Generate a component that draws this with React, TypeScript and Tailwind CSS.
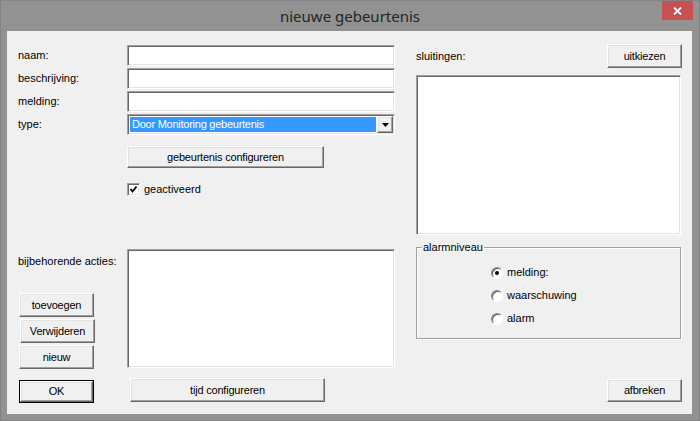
import React from 'react';

const raised =
  'bg-[#f0f0f0] border border-t-white border-l-white border-r-[#696969] border-b-[#696969] shadow-[inset_-1px_-1px_0_#a0a0a0,inset_1px_1px_0_#e3e3e3]';
const sunken =
  'bg-white border border-t-[#a0a0a0] border-l-[#a0a0a0] border-r-white border-b-white shadow-[inset_1px_1px_0_#696969,inset_-1px_-1px_0_#e3e3e3]';

const Btn = ({ label, className = '' }: { label: string; className?: string }) => (
  <div className={`${raised} flex items-center justify-center tracking-[-0.2px] ${className}`}>{label}</div>
);

const Field = ({ label }: { label: string }) => (
  <div className="flex items-center h-[21px]">
    <div className="w-[120px] pl-[11px]">{label}</div>
    <div className={`${sunken} w-[268px] h-[21px]`} />
  </div>
);

const Radio = ({ label, checked = false }: { label: string; checked?: boolean }) => (
  <div className="flex items-center h-[13px] gap-[4px]">
    <div className="w-[12px] h-[12px] rounded-full bg-white border border-t-[#8a8a8a] border-l-[#8a8a8a] border-r-white border-b-white shadow-[inset_1px_1px_0_#5a5a5a] flex items-center justify-center">
      {checked && <div className="w-[4px] h-[4px] rounded-full bg-black" />}
    </div>
    <span>{label}</span>
  </div>
);

const App = () => {
  return (
    <div className="w-[700px] h-[421px] bg-[#929292] border border-[#848484] flex flex-col font-['Liberation_Sans',Arial,sans-serif] text-[11px] leading-[13px] text-black overflow-hidden">
      {/* title bar */}
      <div className="h-[30px] flex items-start shrink-0">
        <div className="w-[37px]" />
        <div className="flex-1 text-center pt-[6px] text-[15px] leading-[18px] text-[#262626] font-['Noto_Sans',sans-serif]">
          nieuwe gebeurtenis
        </div>
        <div className="w-[31px] h-[19px] mr-[6px] bg-[#c75050] flex items-center justify-center">
          <svg width="9" height="8" viewBox="0 0 9 8">
            <path d="M1 0.5 L8 7.5 M8 0.5 L1 7.5" stroke="white" strokeWidth="1.8" />
          </svg>
        </div>
      </div>

      {/* client area */}
      <div className="ml-[6px] mr-[7px] h-[383px] bg-[#f0f0f0] flex shrink-0">
        {/* left column */}
        <div className="w-[388px] flex flex-col pt-[14px]">
          <div className="flex flex-col gap-[2px]">
            <Field label="naam:" />
            <Field label="beschrijving:" />
            <Field label="melding:" />
            <div className="flex items-center h-[21px]">
              <div className="w-[120px] pl-[11px]">type:</div>
              <div className={`${sunken} w-[268px] h-[21px] flex items-center pl-[2px] pr-[1px] gap-[1px]`}>
                <div className="flex-1 h-[15px] bg-[#3399ff] text-white pl-[2px] flex items-center tracking-[-0.25px]">
                  Door Monitoring gebeurtenis
                </div>
                <div className={`${raised} w-[16px] h-[17px] flex items-center justify-center`}>
                  <svg width="7" height="4" viewBox="0 0 7 4">
                    <path d="M0 0 H7 L3.5 4 Z" fill="black" />
                  </svg>
                </div>
              </div>
            </div>
          </div>

          <Btn label="gebeurtenis configureren" className="ml-[120px] mt-[11px] w-[197px] h-[22px]" />

          <div className="ml-[120px] mt-[15px] flex items-center gap-[4px] h-[13px]">
            <div className={`${sunken} w-[13px] h-[13px] flex items-center justify-center`}>
              <svg width="9" height="9" viewBox="0 0 9 9">
                <path d="M1.5 4 L3.5 6.5 L7.5 1.5" stroke="black" strokeWidth="1.8" fill="none" />
              </svg>
            </div>
            <span>geactiveerd</span>
          </div>

          <div className="mt-[53px] flex">
            <div className="w-[120px] flex flex-col">
              <div className="pl-[11px] pt-[6px]">bijbehorende acties:</div>
              <div className="ml-[12px] mt-[25px] flex flex-col gap-[2px]">
                <Btn label="toevoegen" className="w-[75px] h-[24px]" />
                <Btn label="Verwijderen" className="w-[75px] h-[24px] ml-[1px]" />
                <Btn label="nieuw" className="w-[75px] h-[24px]" />
              </div>
            </div>
            <div className={`${sunken} w-[268px] h-[119px]`} />
          </div>

          <div className="mt-[9px] flex items-start">
            <div className="ml-[12px] mt-[2px] w-[75px] h-[23px] border border-black">
              <Btn label="OK" className="w-full h-full" />
            </div>
            <Btn label="tijd configureren" className="ml-[36px] w-[195px] h-[24px]" />
          </div>
        </div>

        {/* right column */}
        <div className="ml-[21px] w-[266px] flex flex-col pt-[13px]">
          <div className="flex items-center justify-between">
            <span>sluitingen:</span>
            <Btn label="uitkiezen" className="w-[75px] h-[24px]" />
          </div>
          <div className={`${sunken} mt-[7px] w-[265px] h-[160px]`} />

          <fieldset className="mt-[6px] w-[265px] h-[98px] border border-[#a0a0a0] shadow-[inset_1px_1px_0_white,1px_1px_0_white]">
            <legend className="ml-[5px] px-[1px] leading-[13px]">alarmniveau</legend>
            <div className="pl-[74px] pt-[12px] flex flex-col gap-[10px]">
              <Radio label="melding:" checked />
              <Radio label="waarschuwing" />
              <Radio label="alarm" />
            </div>
          </fieldset>

          <Btn label="afbreken" className="self-end mt-[40px] w-[75px] h-[23px]" />
        </div>
      </div>
    </div>
  );
};

export default App;
